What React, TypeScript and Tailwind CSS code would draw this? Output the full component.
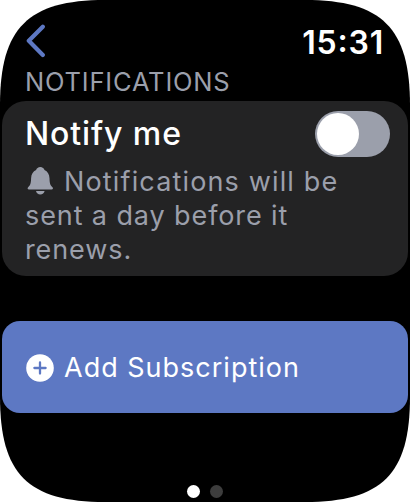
import React from "react";

function BackIcon() {
  return (
    <svg width="20" height="34" viewBox="0 0 20 34" fill="none" className="block">
      <path d="M17.8 2.8 3.8 16.8 17.8 31" stroke="#5d78c3" strokeWidth="4.2" strokeLinecap="round" strokeLinejoin="round" />
    </svg>
  );
}

function BellIcon() {
  return (
    <svg width="27" height="29" viewBox="0 0 27 29" fill="#9b9fab" className="inline-block align-baseline -mb-[4px] ml-[2px] mr-[10px]">
      <path d="M13.3 .9c2.1 0 3.7 1.3 4.2 3.1 3.1 1.5 4.9 4.3 5 8.2.1 5.3.8 6.9 3 9 .8.8.6 2.3-.9 2.3H2c-1.5 0-1.7-1.5-.9-2.3 2.2-2.1 2.9-3.7 3-9 .1-3.9 1.9-6.7 5-8.2.5-1.8 2.1-3.1 4.2-3.1Z" />
      <path d="M9 25.1h8.6c-.5 2-2.1 3.4-4.3 3.4S9.5 27.1 9 25.1Z" />
    </svg>
  );
}

function PlusIcon() {
  return (
    <svg width="28" height="28" viewBox="0 0 28 28" className="block">
      <circle cx="14" cy="14" r="13.8" fill="#fff" />
      <path d="M14 8.4v11.2M8.4 14h11.2" stroke="#5d78c3" strokeWidth="2.3" strokeLinecap="round" />
    </svg>
  );
}

export default function App() {
  return (
    <div className="h-[502px] w-[410px] overflow-hidden bg-white font-['Inter',sans-serif]">
      <main className="flex h-full flex-col bg-black px-[2px] [clip-path:path('M0_105C0_28_28_0_105_0H305C382_0_410_28_410_105V397C410_474_382_502_305_502H105C28_502_0_474_0_397Z')]">
        <header className="flex h-[68px] shrink-0 items-start justify-between pl-[23px] pr-[24px] pt-[24px]">
          <button aria-label="Back"><BackIcon /></button>
          <time className="pt-px text-[32px] font-semibold leading-[36px] tracking-[0.8px] text-white">15<span className="relative -top-[2px]">:</span>31</time>
        </header>
        <h2 className="h-[33px] shrink-0 whitespace-nowrap pl-[23px] text-[25.5px] leading-[28px] tracking-[0.8px] text-[#9b9fab]">NOTIFICATIONS</h2>
        <section className="h-[175px] shrink-0 rounded-[24px] bg-[#232324] pl-[23px] pr-[18px] pt-[9px]">
          <div className="flex h-[48px] items-center justify-between">
            <span className="whitespace-nowrap text-[32px] font-medium leading-[48px] tracking-[0.9px] text-white">Notify me</span>
            <button role="switch" aria-checked="false" aria-label="Notify me" className="flex h-[46px] w-[75px] items-center rounded-full bg-[#9b9fab] p-[2px]">
              <span className="h-[42px] w-[42px] rounded-full bg-white" />
            </button>
          </div>
          <p className="mt-[7px] whitespace-nowrap text-[27px] leading-[34px] tracking-[0.9px] text-[#9b9fab]">
            <BellIcon /><span className="tracking-[1.15px]">Notifications will be</span><br />
            <span>sent a day before it</span><br />
            <span>renews.</span>
          </p>
        </section>
        <button className="mt-[45px] flex h-[92px] shrink-0 items-center gap-[10px] rounded-[18px] bg-[#5d78c3] pl-[24px] pt-[2px] text-left">
          <PlusIcon />
          <span className="whitespace-nowrap text-[27px] leading-[34px] tracking-[1px] text-white">Add Subscription</span>
        </button>
        <div className="mt-[72px] flex justify-center gap-[10px]">
          <span className="h-[13px] w-[13px] rounded-full bg-white" />
          <span className="h-[13px] w-[13px] rounded-full bg-[#3d3d3d]" />
        </div>
      </main>
    </div>
  );
}
